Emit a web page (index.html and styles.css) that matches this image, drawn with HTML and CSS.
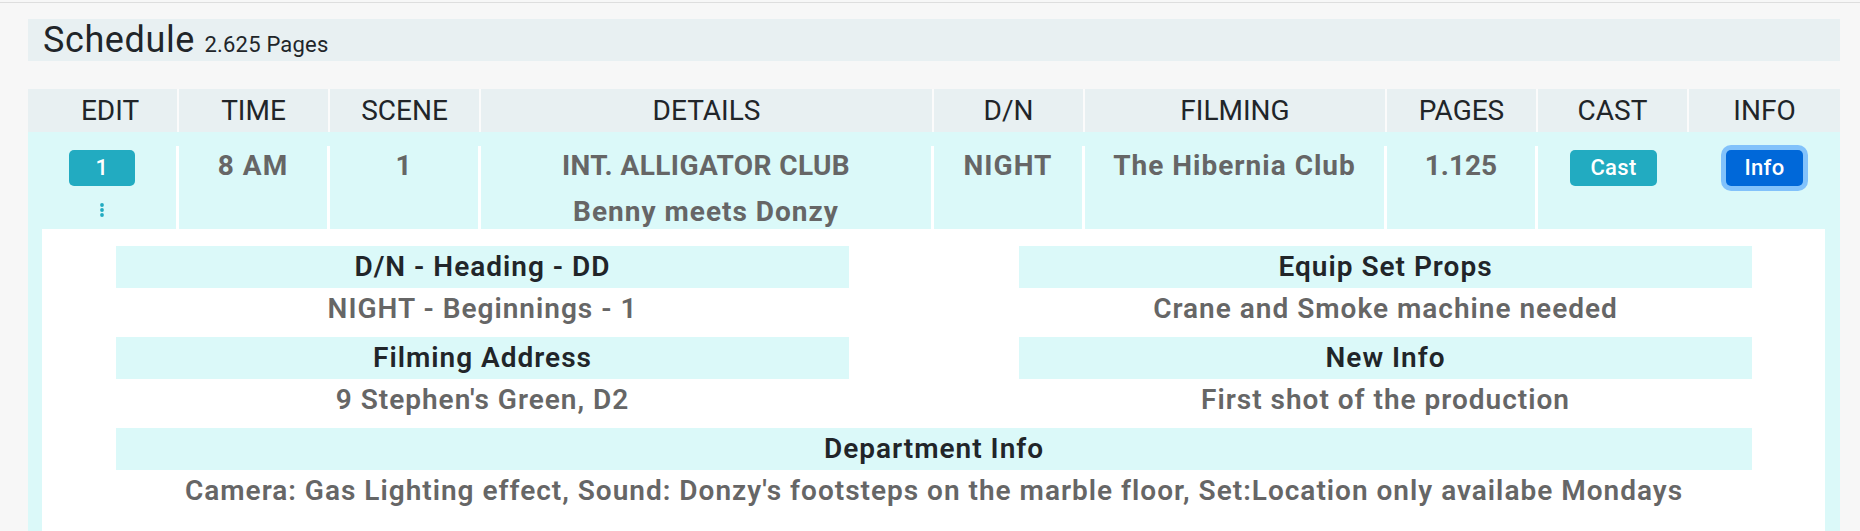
FILE: index.html
```html
<!DOCTYPE html>
<html lang="en">
<head>
<meta charset="utf-8">
<title>Schedule</title>
<link rel="stylesheet" href="styles.css">
</head>
<body>
<div class="topline"></div>
<main class="page">
  <div class="titlebar"><span class="title">Schedule</span> <span class="pages">2.625 Pages</span></div>

  <div class="table">
    <div class="thead">
      <div class="th th-edit">EDIT</div>
      <div class="th">TIME</div>
      <div class="th">SCENE</div>
      <div class="th">DETAILS</div>
      <div class="th">D/N</div>
      <div class="th">FILMING</div>
      <div class="th">PAGES</div>
      <div class="th">CAST</div>
      <div class="th th-last">INFO</div>
    </div>

    <div class="row">
      <div class="cells">
        <div class="td">
          <button class="btn btn-teal btn-num">1</button>
          <svg class="kebab" width="4" height="14" viewBox="0 0 4 14" aria-hidden="true">
            <circle cx="2" cy="2" r="1.9"/>
            <circle cx="2" cy="7" r="1.9"/>
            <circle cx="2" cy="12" r="1.9"/>
          </svg>
        </div>
        <div class="td">8 AM</div>
        <div class="td">1</div>
        <div class="td">
          <div class="first">INT. ALLIGATOR CLUB</div>
          <div class="second">Benny meets Donzy</div>
        </div>
        <div class="td">NIGHT</div>
        <div class="td">The Hibernia Club</div>
        <div class="td td-num">1.125</div>
        <div class="td td-noborder"><button class="btn btn-teal btn-cast">Cast</button></div>
        <div class="td td-noborder"><button class="btn btn-blue">Info</button></div>
      </div>

      <div class="panel">
        <div class="panel-grid">
          <div class="pcol">
            <div class="band">D/N - Heading - DD</div>
            <div class="val">NIGHT - Beginnings - 1</div>
            <div class="band">Filming Address</div>
            <div class="val">9 Stephen's Green, D2</div>
          </div>
          <div class="pcol">
            <div class="band">Equip Set Props</div>
            <div class="val">Crane and Smoke machine needed</div>
            <div class="band">New Info</div>
            <div class="val">First shot of the production</div>
          </div>
        </div>
        <div class="band">Department Info</div>
        <div class="val">Camera: Gas Lighting effect, Sound: Donzy's footsteps on the marble floor, Set:Location only availabe Mondays</div>
      </div>
    </div>
  </div>
</main>
</body>
</html>
```

FILE: styles.css
```css
* {
  box-sizing: border-box;
}

body {
  margin: 0;
  background: #f7f7f7;
  font-family: Roboto, "Liberation Sans", sans-serif;
  color: #212529;
}

.topline {
  height: 1px;
  margin-top: 2px;
  background: #dedede;
}

.page {
  padding: 16px 20px 0 28px;
}

.titlebar {
  height: 42px;
  line-height: 42px;
  padding-left: 15px;
  background: #e8f0f2;
  font-size: 36px;
  letter-spacing: 0.6px;
  white-space: nowrap;
  overflow: hidden;
}

.pages {
  font-size: 22px;
  letter-spacing: 0.2px;
  line-height: 1;
}

.table {
  margin-top: 28px;
}

.thead,
.cells {
  display: grid;
  grid-template-columns: 1fr 1fr 1fr 3fr 1fr 2fr 1fr 1fr 1fr;
}

.thead {
  background: #e8f0f2;
}

.th {
  height: 43px;
  line-height: 43px;
  font-size: 28px;
  text-align: center;
  border-right: 2px solid #fbfbfb;
  white-space: nowrap;
}

.th-edit {
  padding-left: 15px;
}

.th-last {
  border-right: 0;
}

.row {
  background: #dbf9f9;
  padding-top: 14px;
}

.td {
  padding-top: 3px;
  border-right: 3px solid #fff;
  text-align: center;
  font-size: 28px;
  line-height: 34px;
  font-weight: 700;
  color: #666;
  letter-spacing: 1px;
  white-space: nowrap;
}

.td-num {
  letter-spacing: 0;
}

.td-noborder {
  border-right: 0;
}

.first {
  letter-spacing: 0.4px;
}

.second {
  margin-top: 12px;
}

.btn {
  display: inline-block;
  height: 36px;
  line-height: 36px;
  border: 0;
  border-radius: 5px;
  font-family: inherit;
  font-size: 22px;
  font-weight: 500;
  letter-spacing: 0.3px;
  color: #fff;
  vertical-align: baseline;
}

.btn-teal {
  background: #22abc1;
}

.btn-num {
  padding: 0 27px;
}

.btn-cast {
  padding: 0 20px;
}

.btn-blue {
  background: #0068d9;
  padding: 0 19px;
  box-shadow: 0 0 0 5px #82c2fb;
}

.kebab {
  display: block;
  margin: 17px auto 0;
  fill: #22abc1;
}

.panel {
  margin: 0 15px 0 14px;
  padding: 17px 73px 40px 74px;
  background: #fff;
}

.panel-grid {
  display: flex;
  gap: 170px;
}

.pcol {
  flex: 1;
}

.band {
  height: 42px;
  line-height: 42px;
  background: #dbf9f9;
  text-align: center;
  font-size: 28px;
  font-weight: 600;
  letter-spacing: 1px;
  color: #212529;
}

.val {
  line-height: 42px;
  margin-bottom: 7px;
  text-align: center;
  font-size: 28px;
  font-weight: 600;
  letter-spacing: 1px;
  color: #666;
  white-space: nowrap;
}
```
